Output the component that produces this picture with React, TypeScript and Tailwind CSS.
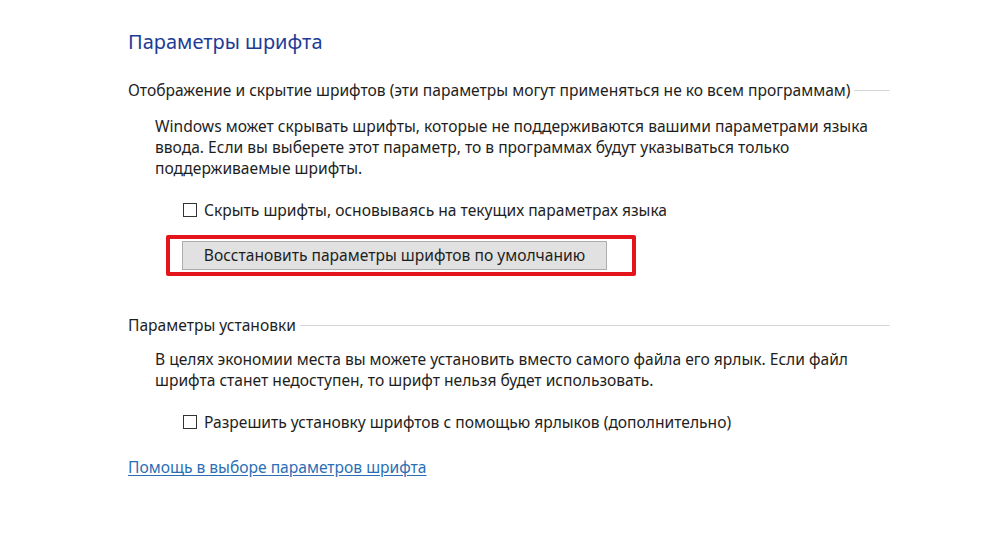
export default function App() {
  return (
    <div className="w-[1000px] h-[537px] bg-white overflow-hidden font-['Noto_Sans',sans-serif] text-[#1e1e1e]">
      <div className="pl-[128px] pt-[28px] w-[890px]">
        <h1 className="text-[20px] leading-[28px] text-[#1e3c96]">Параметры шрифта</h1>

        <div className="mt-[24px] flex items-center text-[15.6px] leading-[20px]">
          <span>Отображение и скрытие шрифтов (эти параметры могут применяться не ко всем программам)</span>
          <div className="flex-1 ml-[4px] h-px bg-[#d8d8d8]" />
        </div>

        <div className="pl-[27px] mt-[16px]">
          <p className="text-[15.6px] leading-[21px] w-[730px]">
            Windows может скрывать шрифты, которые не поддерживаются вашими параметрами языка ввода. Если вы выберете этот параметр, то в программах будут указываться только поддерживаемые шрифты.
          </p>

          <label className="mt-[21px] ml-[28px] flex items-center gap-[7px] text-[15.6px] leading-[20px]">
            <span className="w-[14px] h-[14px] border border-[#333] bg-white" />
            <span>Скрыть шрифты, основываясь на текущих параметрах языка</span>
          </label>

          <div className="mt-[15px] ml-[11px] w-[470px] border-[4px] border-[#e3141b] rounded-[2px] pl-[12px] py-[2px]">
            <button className="w-[425px] h-[29px] bg-[#e1e1e1] border border-[#adadad] text-[15.6px] text-[#1e1e1e]">
              Восстановить параметры шрифтов по умолчанию
            </button>
          </div>
        </div>

        <div className="mt-[39px] flex items-center text-[15.6px] leading-[20px]">
          <span>Параметры установки</span>
          <div className="flex-1 ml-[4px] h-px bg-[#d8d8d8]" />
        </div>

        <div className="pl-[27px] mt-[14px]">
          <p className="text-[15.6px] leading-[21px] w-[730px]">
            В целях экономии места вы можете установить вместо самого файла его ярлык. Если файл шрифта станет недоступен, то шрифт нельзя будет использовать.
          </p>

          <label className="mt-[21px] ml-[28px] flex items-center gap-[7px] text-[15.6px] leading-[20px]">
            <span className="w-[14px] h-[14px] border border-[#333] bg-white" />
            <span>Разрешить установку шрифтов с помощью ярлыков (дополнительно)</span>
          </label>
        </div>

        <a href="#" className="block mt-[25px] text-[15.6px] leading-[20px] text-[#2a6fb5] underline underline-offset-[2px] w-fit">
          Помощь в выборе параметров шрифта
        </a>
      </div>
    </div>
  );
}
